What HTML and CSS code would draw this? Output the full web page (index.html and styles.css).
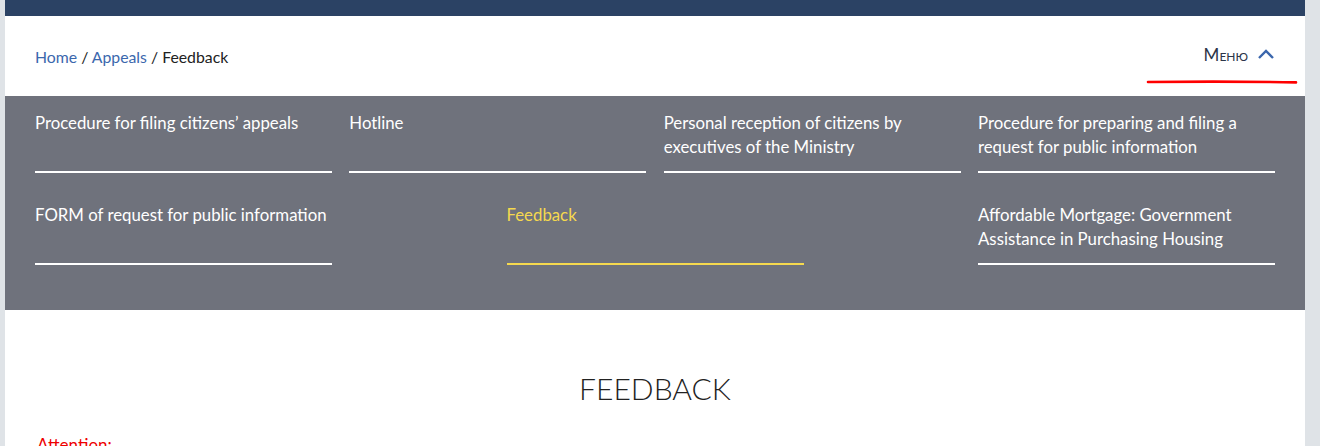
FILE: index.html
```html
<!DOCTYPE html>
<html lang="en">
<head>
    <meta charset="UTF-8">
    <meta name="viewport" content="width=device-width, initial-scale=1.0">
    <title>Feedback</title>
    <link rel="stylesheet" href="styles.css">
</head>
<body>
    <div class="page">
        <div class="topbar"></div>
        <div class="header">
            <div class="breadcrumbs">
                <a href="#">Home</a> / <a href="#">Appeals</a> / <span class="current">Feedback</span>
            </div>
            <button class="menu-toggle">
                <span class="menu-label">Меню</span>
                <svg class="chevron" width="18" height="12" viewBox="0 0 18 12">
                    <path d="M2 10 L9 3 L16 10" fill="none" stroke="#3b67ad" stroke-width="2.4"/>
                </svg>
            </button>
            <svg class="scribble" width="152" height="8" viewBox="0 0 152 8">
                <path d="M2 4 C 40 3.6, 100 3.4, 150 4.4" fill="none" stroke="#ff0000" stroke-width="2.6" stroke-linecap="round"/>
            </svg>
        </div>
        <nav class="submenu">
            <a href="#" class="sub-item">Procedure for filing citizens’ appeals</a>
            <a href="#" class="sub-item">Hotline</a>
            <a href="#" class="sub-item">Personal reception of citizens by executives of the Ministry</a>
            <a href="#" class="sub-item">Procedure for preparing and filing a request for public information</a>
            <a href="#" class="sub-item">FORM of request for public information</a>
            <a href="#" class="sub-item active">Feedback</a>
            <a href="#" class="sub-item">Affordable Mortgage: Government Assistance in Purchasing Housing</a>
        </nav>
        <div class="content">
            <h1>FEEDBACK</h1>
            <p class="attention">Attention:</p>
        </div>
    </div>
</body>
</html>
```

FILE: styles.css
```css
body {
    margin: 0;
    background-color: #dfe3e7;
    font-family: Lato, "Open Sans", sans-serif;
}
.page {
    width: 1300px;
    margin-left: 5px;
    background-color: white;
    min-height: 446px;
}
.topbar {
    height: 16px;
    background-color: #2b4264;
}
.header {
    position: relative;
    height: 80px;
    padding: 0 30px;
    display: flex;
    align-items: center;
    justify-content: space-between;
}
.breadcrumbs {
    font-size: 15.8px;
    color: #222;
    padding-top: 1px;
}
.breadcrumbs a {
    color: #3b67ad;
    text-decoration: none;
}
.menu-toggle {
    display: flex;
    align-items: center;
    gap: 9px;
    background: none;
    border: none;
    padding: 0 0 4px 0;
    cursor: pointer;
    font-family: Lato, "Open Sans", sans-serif;
}
.menu-label {
    font-size: 17px;
    font-variant: small-caps;
    color: #2b3548;
}
.scribble {
    position: absolute;
    right: 7px;
    top: 62px;
}
.submenu {
    background-color: #6f727c;
    padding: 15px 30px 45px;
    display: flex;
    flex-wrap: wrap;
    justify-content: space-between;
    row-gap: 30px;
}
.sub-item {
    width: 297px;
    box-sizing: border-box;
    min-height: 62px;
    padding-bottom: 12px;
    border-bottom: 2px solid white;
    color: white;
    text-decoration: none;
    font-size: 16.8px;
    line-height: 24px;
}
.sub-item.active {
    color: #f5d94e;
    border-bottom-color: #f5d94e;
}
.content {
    padding: 0 30px;
}
h1 {
    margin: 0;
    padding-top: 60px;
    text-align: center;
    font-weight: 300;
    font-size: 30px;
    color: #222;
}
.attention {
    margin: 28px 0 0 2px;
    color: #ee0000;
    font-size: 17px;
}
```
